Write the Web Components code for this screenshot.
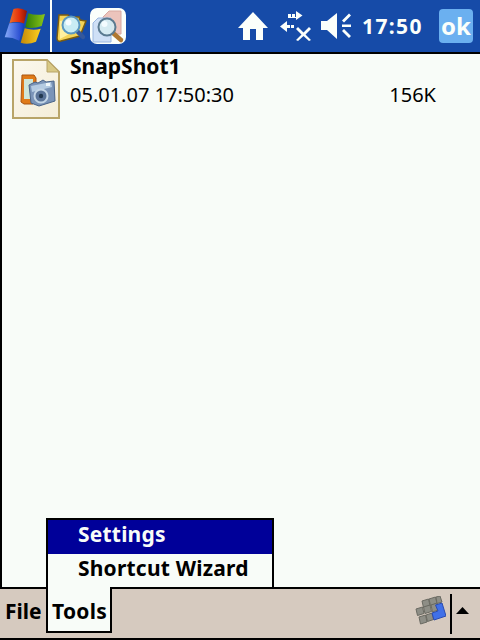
<!DOCTYPE html>
<html><head><meta charset="utf-8">
<style>
html,body{margin:0;padding:0;background:#000}
body{width:480px;height:640px;overflow:hidden;font-family:"DejaVu Sans","Liberation Sans",sans-serif}
</style></head><body>
<ppc-screen>
  <ppc-titlebar slot="top" time="17:50"></ppc-titlebar>
  <ppc-file-row name="SnapShot1" date="05.01.07 17:50:30" size="156K"></ppc-file-row>
  <ppc-menu slot="overlay">
    <ppc-menu-item selected>Settings</ppc-menu-item>
    <ppc-menu-item>Shortcut Wizard</ppc-menu-item>
  </ppc-menu>
  <ppc-menubar slot="bottom"></ppc-menubar>
</ppc-screen>
<script>
const FONT='"Noto Sans","DejaVu Sans",sans-serif';
const PAPER='#f8fcf8';
function def(name,html,init){
  customElements.define(name,class extends HTMLElement{
    constructor(){super();this.attachShadow({mode:'open'}).innerHTML=html;}
    connectedCallback(){ if(init) init(this); }
  });
}
def('ppc-screen',`<style>
:host{display:flex;flex-direction:column;width:480px;height:640px;position:relative;background:#000;box-sizing:border-box}
.main{flex:1;min-height:0;background:${PAPER};margin:2px 0 2px 2px;display:block}
.overlay{position:absolute;left:46px;top:518px;z-index:1}
</style><slot name="top"></slot><div class="main"><slot></slot></div><slot name="bottom"></slot><div class="overlay"><slot name="overlay"></slot></div>`);

def('ppc-titlebar',`<style>
:host{display:flex;align-items:stretch;height:52px;background:#164ba8;color:#fbfffb;font:700 21px ${FONT}}
.start{width:50px;border-right:2px solid #fbfffb;display:flex;align-items:center;justify-content:center}
.apps{display:flex;align-items:center;gap:3px;padding-left:4px;flex:1}
.tray{display:flex;align-items:center;}
svg{display:block}
.t{width:60px;margin-left:11px;letter-spacing:1.4px}
.ok{width:34px;height:34px;margin:0 7px 0 17px;background:#6bb0f0;border-radius:4px;display:flex;align-items:center;justify-content:center;font-size:24px;line-height:34px}
</style>
<div class="start"><svg width="50" height="52" viewBox="0 0 50 52">
<defs>
<linearGradient id="r" x1="0" x2="1"><stop offset="0" stop-color="#f07028"/><stop offset=".55" stop-color="#e2300c"/><stop offset="1" stop-color="#8c1606"/></linearGradient>
<linearGradient id="g" x1="0" x2="1"><stop offset="0" stop-color="#2e7c06"/><stop offset="1" stop-color="#8cc818"/></linearGradient>
<linearGradient id="b" x1="0" x2="1"><stop offset="0" stop-color="#86aaf8"/><stop offset="1" stop-color="#1438c8"/></linearGradient>
<linearGradient id="y" x1="0" x2="1"><stop offset="0" stop-color="#c48808"/><stop offset="1" stop-color="#fcd020"/></linearGradient>
</defs>
<path d="M13.500 9Q20 7 27 11L24 23.500Q17 21 9.500 23z" fill="url(#r)"/>
<path d="M28.300 13.300Q36 16 45 14L41.700 26Q33 29 25.300 27.300z" fill="url(#g)"/>
<path d="M9.300 23.300Q17 22 24 24L19.300 40.700Q12 37 4.700 37.300z" fill="url(#b)"/>
<path d="M24.700 28.300Q33 31 40.700 28.700L36 41.700Q28 45 20.700 42.700z" fill="url(#y)"/>
</svg></div>
<div class="apps">
<svg width="31" height="30" viewBox="0 0 31 30" style="margin-top:3px">
<path d="M3 2h9l2 2h9l1 3 6 1-6 15-19 5q-4 1-4-3z" fill="#f4d458" stroke="#7a5c10" stroke-width="1.500"/>
<path d="M4 8l8-2 3 14-11 6z" fill="#fff0a0"/>
<line x1="20" y1="17" x2="27" y2="24" stroke="#34589c" stroke-width="4.500" stroke-linecap="round"/>
<circle cx="15" cy="12" r="8.500" fill="#c8ecf4" stroke="#5a98c0" stroke-width="2"/>
<circle cx="12.500" cy="9.500" r="3" fill="#f4fcff"/>
</svg>
<div style="width:36px;height:36px;background:#fbfffb;border-radius:7px">
<svg width="36" height="36" viewBox="0 0 36 36">
<path d="M13 9l6-6h12v23H13z" fill="#ecc4bc" stroke="#d8a8a0"/>
<path d="M3 15l5-5h13v24H3z" fill="#cfe0f6" stroke="#9cb8e0"/>
<line x1="23" y1="25" x2="31" y2="32" stroke="#b07830" stroke-width="4.500" stroke-linecap="round"/>
<circle cx="17" cy="19" r="8.500" fill="#d6ecf2" fill-opacity=".9" stroke="#5a7a90" stroke-width="2"/>
<circle cx="14.500" cy="16" r="3" fill="#f4fcff"/>
</svg></div>
</div>
<div class="tray">
<svg width="30" height="28" viewBox="0 0 30 28" fill="#fbfffb"><path d="M15 0L30 16h-5v12h-7V17h-6v11H5V16H0z"/></svg>
<svg width="31" height="30" viewBox="0 0 31 30" fill="#fbfffb" style="margin-left:12px">
<path d="M8 3h3v3H8zM12 3h3v3h-3zM16 3V0l6.500 4.500L16 9V7H8V6h8z"/>
<path d="M7 10v4h3v3H7v4L0 15.500zM11 14h3v3h-3z"/>
<path d="M16 18l2-2 5.500 5.500L29 16l2 2-5.500 5.500L31 29l-2 1-5.500-5-5.500 5-2-1 5.500-5.500z"/>
</svg>
<svg width="30" height="26" viewBox="0 0 30 26" fill="#fbfffb" style="margin-left:10px">
<path d="M0 8h6L16 0v26L6 17H0z"/>
<path d="M21 7.500l7-7 2 2-7 7zM21 11.500h9V14h-9zM23 16l7 7-2 2-7-7z"/>
</svg>
<div class="t" id="t"></div><div class="ok">ok</div>
</div>`,el=>{el.shadowRoot.getElementById('t').textContent=el.getAttribute('time')});

def('ppc-file-row',`<style>
:host{display:grid;grid-template-columns:48px 1fr auto;grid-template-rows:24px 34px;column-gap:10px;padding:0 44px 0 10px;color:#000;font:400 20px/34px ${FONT}}
.ic{grid-row:1/3;width:48px;height:60px;margin-top:5px}
b{grid-column:2/4;font-weight:700;font-size:21px;line-height:24px}
.s{text-align:right}
svg{display:block}
</style>
<svg class="ic" width="48" height="60" viewBox="0 0 48 60">
<defs><linearGradient id="bg" x1="0" y1="0" x2="1" y2="1"><stop offset="0" stop-color="#fbf8ee"/><stop offset="1" stop-color="#f4edd8"/></linearGradient></defs>
<path d="M1 1h34l12 12v46H1z" fill="url(#bg)" stroke="#b8a468" stroke-width="2"/>
<path d="M35 1v12h12z" fill="#d8c884" stroke="#b8a468"/>
<path d="M10 16h12l2 3v23l-3 3H12l-3-2z" fill="#e07a18" stroke="#a85410"/>
<rect x="12" y="20" width="9" height="20" fill="#cfe6d8"/>
<path d="M17 26l6-3 3 1 5-3 3 2 8-1 1 20-16 5-8-3z" fill="#7a94b8" stroke="#4a6488"/>
<path d="M19 27l20-4 1 5-20 5z" fill="#b4cbe2"/>
<rect x="34" y="24" width="4" height="3" fill="#eef6fa"/>
<circle cx="29" cy="37" r="6.500" fill="#5a7498" stroke="#c4d6e6" stroke-width="2"/>
<circle cx="29" cy="37" r="2.200" fill="#22384f"/>
</svg>
<b id="n"></b><span id="d"></span><span class="s" id="s"></span>`,el=>{
  for(const [i,a] of [['n','name'],['d','date'],['s','size']]) el.shadowRoot.getElementById(i).textContent=el.getAttribute(a);
});

def('ppc-menu',`<style>
:host{display:block;width:228px;box-sizing:border-box;border:2px solid #000;background:${PAPER};height:71px}
</style><slot></slot>`);
def('ppc-menu-item',`<style>
:host{display:block;height:33px;padding-left:30px;font:700 21px/29px ${FONT};letter-spacing:.2px;color:#000}
:host([selected]){height:34px;line-height:28px;background:#000099;color:${PAPER}}
</style><slot></slot>`);

def('ppc-menubar',`<style>
:host{display:flex;align-items:stretch;height:49px;background:#d6cabf;margin-bottom:2px;color:#000;font:700 21px ${FONT};position:relative;z-index:2}
.m{display:flex;align-items:center;height:44px}
.file{padding-left:5px;width:41px}
.tools{width:58px;padding-left:4px;background:${PAPER};border:2px solid #000;border-top:0;letter-spacing:.3px;position:relative;height:42px;padding-bottom:0}
.tools span{position:relative;top:1px}
.tools::before{content:"";position:absolute;left:0;right:0;top:-2px;height:2px;background:${PAPER}}
.sp{flex:1}
.sip{display:flex;align-items:center;padding-right:11px}
.div{width:2px;height:40px;background:#000;margin:0 4px 0 4px}
svg{display:block}
</style>
<div class="m file">File</div><div class="m tools"><span>Tools</span></div><div class="sp"></div>
<div class="sip">
<svg width="31" height="30" viewBox="0 0 31 30" style="margin-bottom:5px">
<g stroke="#6a6a62" stroke-width="1" fill="#8e8e86">
<path d="M7 5l6.500-2 1.500 6.500-6.500 2z"/><path d="M14 3l6.500-2L22 7.500l-6.500 2z"/><path d="M21 1l4-1 2 6-5 1.500z"/>
<path d="M1 13l6.500-2L9 17.500l-6.500 2z"/><path d="M8.500 11l6.500-2 1.500 6.500-6.500 2z"/><path d="M16 9l6-2 1 7-5.500 2z"/>
<path d="M4 21l6.500-2 1.500 7-6.500 2z"/><path d="M11 19l6-2 1.500 6.500-6 2z"/>
</g>
<path d="M20.500 9l6.500-2 4 13-12 4-2-7 6-2z" fill="#4070e8" stroke="#2a4cb0"/>
</svg>
<div class="div"></div>
<svg width="13" height="7" viewBox="0 0 13 7" style="margin-bottom:7px"><path d="M6.500 0L13 7H0z"/></svg>
</div>`);
</script>
</body></html>
